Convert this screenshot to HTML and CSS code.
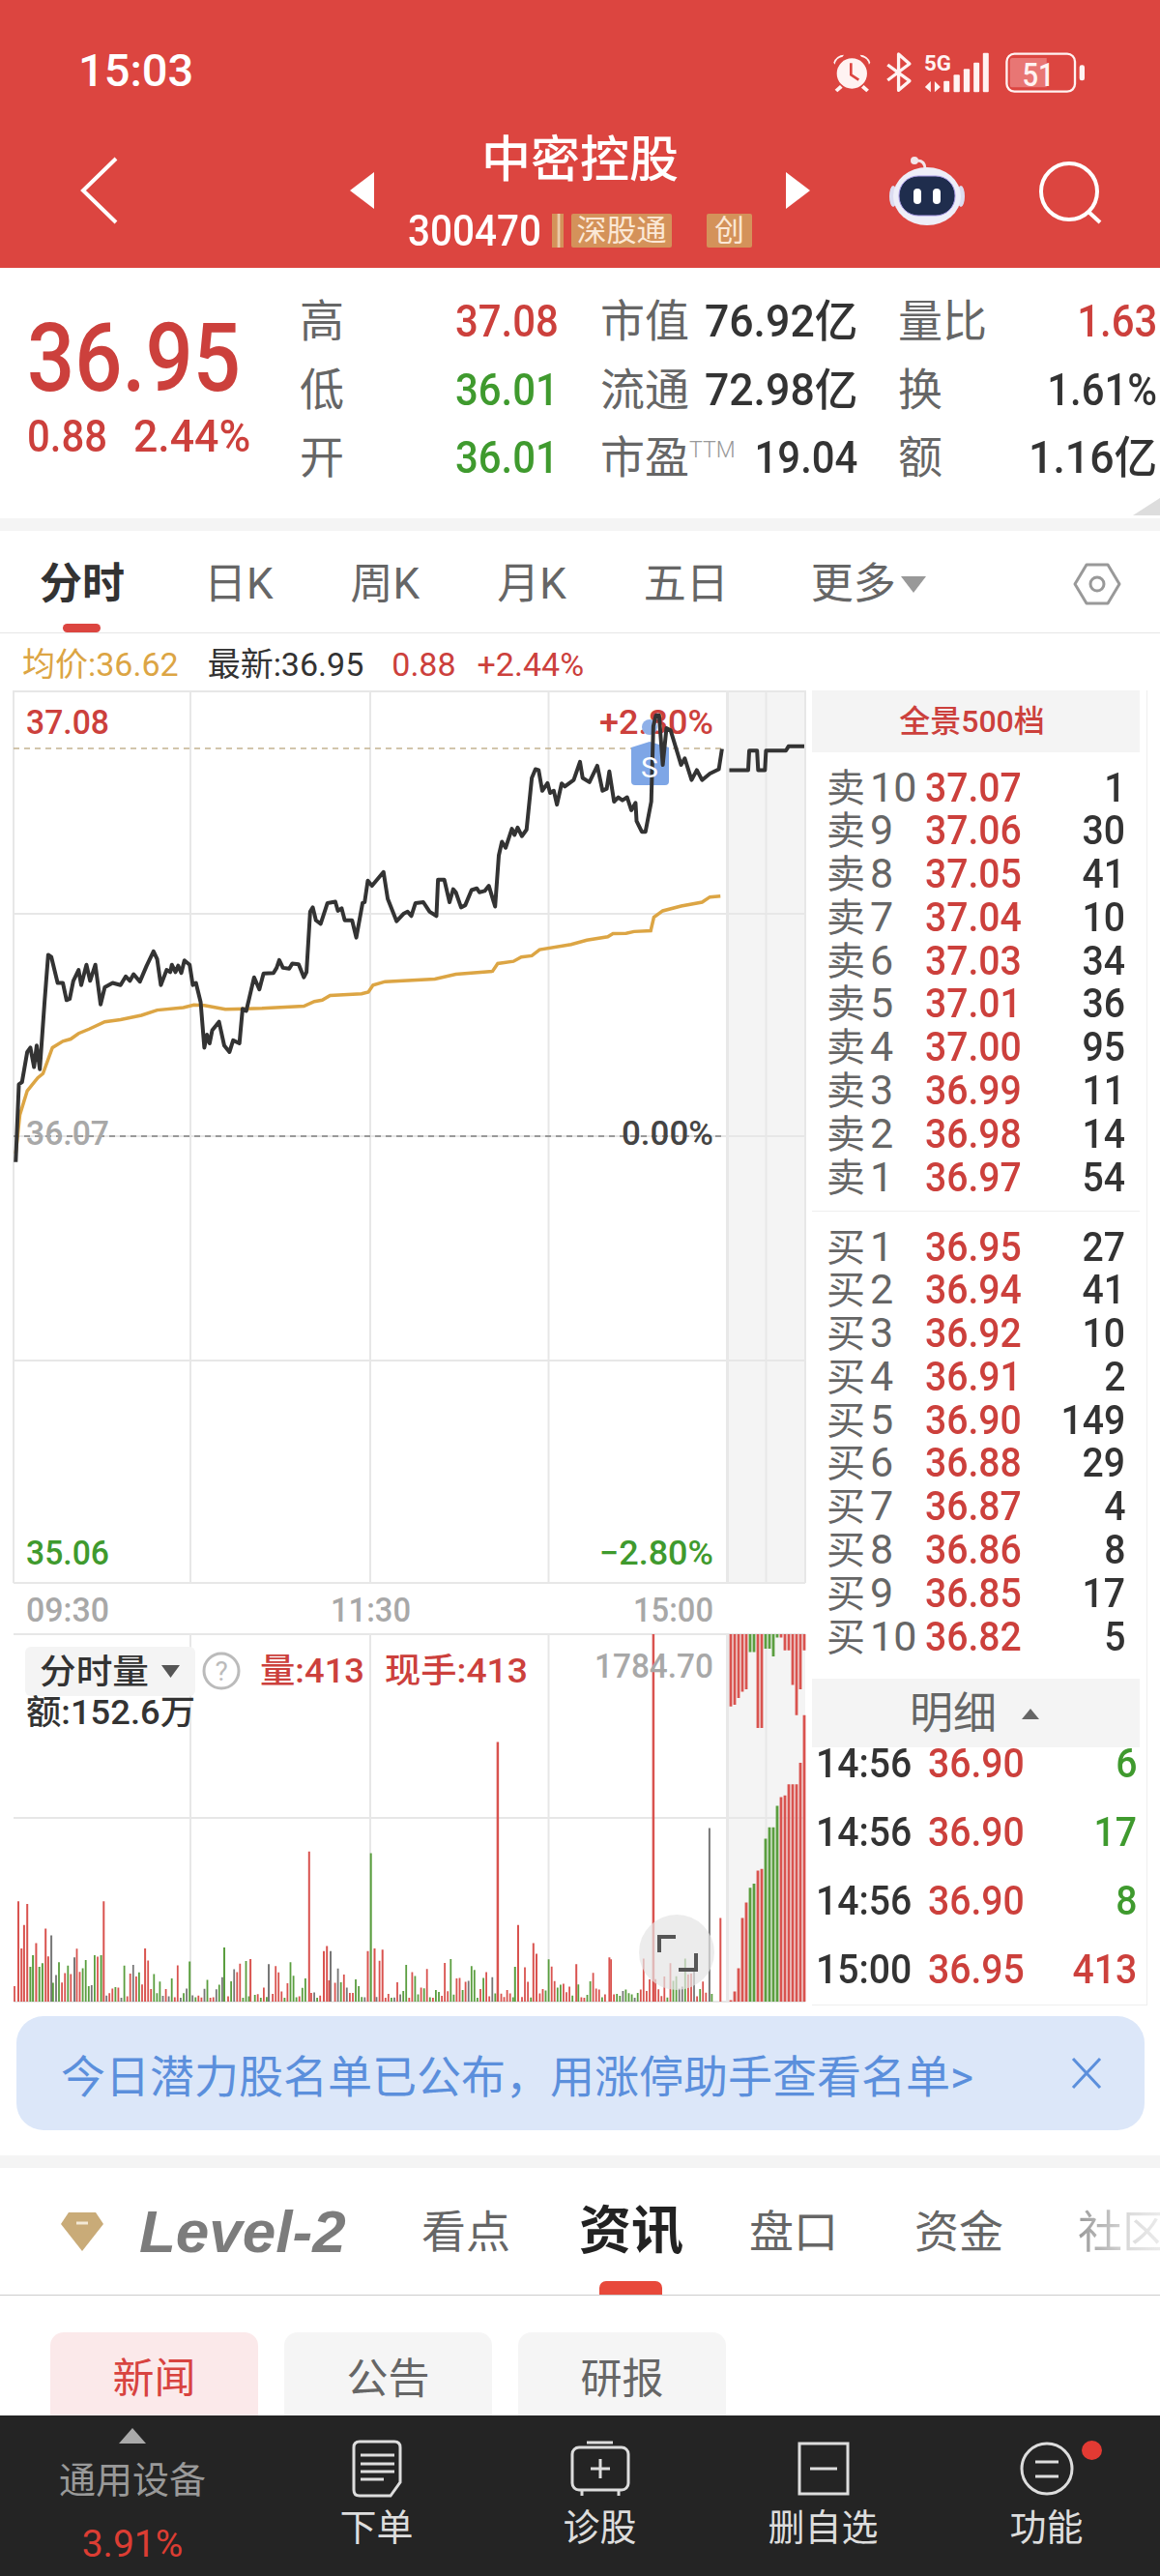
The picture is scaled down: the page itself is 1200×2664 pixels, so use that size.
FILE: index.html
```html
<!DOCTYPE html>
<html lang="zh-CN">
<head>
    <meta charset="UTF-8">
    <meta name="viewport" content="width=device-width, initial-scale=1.0">
    <title>中密控股</title>
    <link rel="stylesheet" href="styles.css">
</head>
<body>
    <div class="page">
        <!-- 顶部红色区域 -->
        <header class="top">
            <div class="status">
                <span class="clock">15:03</span>
                <svg class="status-icons" width="268" height="47" viewBox="55 60 805 141">
                    <g fill="#fff3f2">
                        <circle cx="125" cy="132" r="47"/>
                        <path d="M68 98 A34 34 0 0 1 100 74 L96 80 A30 30 0 0 0 72 104Z"/>
                        <path d="M182 98 A34 34 0 0 0 150 74 L154 80 A30 30 0 0 1 178 104Z"/>
                        <path d="M72 182 L88 168 L96 176 L80 190Z M178 182 L162 168 L154 176 L170 190Z"/>
                    </g>
                    <path d="M122 100 V136 L146 152" fill="none" stroke="#dc4540" stroke-width="8"/>
                    <path d="M236 105 L304 155 L270 184 V72 L304 102 L236 153" fill="none" stroke="#fff3f2" stroke-width="10" stroke-linejoin="round"/>
                    <text class="st-5g" x="349" y="124" textLength="84" lengthAdjust="spacingAndGlyphs">5G</text>
                    <path d="M352 174 L370 156 V190Z M382 156 L400 174 L382 190Z" fill="#fff3f2"/>
                    <g fill="#fff3f2">
                        <rect x="410" y="155" width="18" height="35" rx="3"/>
                        <rect x="441" y="136" width="19" height="54" rx="3"/>
                        <rect x="472" y="118" width="19" height="72" rx="3"/>
                        <rect x="503" y="98" width="18" height="92" rx="3"/>
                        <rect x="532" y="68" width="18" height="122" rx="3"/>
                    </g>
                    <rect x="606" y="71" width="212" height="117" rx="24" fill="none" stroke="#fff3f2" stroke-width="7"/>
                    <path d="M622 84 H730 V175 H622 Q616 175 616 168 V92 Q616 84 622 84Z" fill="#e87674"/>
                    <rect x="832" y="106" width="16" height="48" rx="7" fill="#fff3f2"/>
                    <text class="st-batt" x="654" y="170" textLength="100" lengthAdjust="spacingAndGlyphs">51</text>
                </svg>
            </div>
            <div class="nav">
                <div class="nav-left">
                    <svg width="39" height="70" viewBox="0 0 39 70"><path d="M37 2 L3 35 L37 68" fill="none" stroke="#fff" stroke-width="4"/></svg>
                </div>
                <div class="stock">
                    <span class="tri tri-left"></span>
                    <div class="stock-mid">
                        <div class="stock-name">中密控股</div>
                        <div class="stock-code">
                            <span class="code">300470</span>
                            <span class="sliver"></span>
                            <span class="badge">深股通</span>
                            <span class="badge badge-cy">创</span>
                        </div>
                    </div>
                    <span class="tri tri-right"></span>
                </div>
                <div class="nav-right">
                    <svg width="80" height="72" viewBox="0 0 80 72">
                        <path d="M38 14 Q38 5 30 5" fill="none" stroke="#f3e6ea" stroke-width="3"/>
                        <circle cx="27" cy="5" r="4" fill="#f3e6ea"/>
                        <ellipse cx="5" cy="42" rx="4" ry="11" fill="#dcdcf0"/>
                        <ellipse cx="75" cy="42" rx="4" ry="11" fill="#dcdcf0"/>
                        <ellipse cx="40" cy="42" rx="35" ry="30" fill="#eeeef8"/>
                        <rect x="11" y="21" width="58" height="41" rx="20" fill="#1f2d4d" stroke="#a99be6" stroke-width="1"/>
                        <rect x="26" y="34" width="8" height="16" rx="4" fill="#fff"/>
                        <rect x="46" y="34" width="8" height="16" rx="4" fill="#fff"/>
                    </svg>
                    <svg class="search" width="66" height="66" viewBox="0 0 66 66">
                        <circle cx="32" cy="32" r="29" fill="none" stroke="#fff" stroke-width="4"/>
                        <path d="M52 53 L64 64" stroke="#fff" stroke-width="4"/>
                    </svg>
                </div>
            </div>
        </header>

        <!-- 报价 -->
        <section class="quote">
            <div class="quote-main">
                <div class="big-price c-l">36.95</div>
                <div class="quote-sub">
                    <span class="sub-a"><span class="c-l">0.88</span></span><span class="c-l c-wide">2.44%</span>
                </div>
            </div>
            <div class="quote-table">
                <div class="q-row">
                    <span class="q-lab">高</span>
                    <span class="q-val red"><span class="c-l">37.08</span></span>
                    <span class="q-cell"><span class="q-name">市值</span><span class="c-r c-wide">76.92亿</span></span>
                    <span class="q-cell"><span class="q-name">量比</span><span class="c-r red">1.63</span></span>
                </div>
                <div class="q-row">
                    <span class="q-lab">低</span>
                    <span class="q-val green"><span class="c-l">36.01</span></span>
                    <span class="q-cell"><span class="q-name">流通</span><span class="c-r c-wide">72.98亿</span></span>
                    <span class="q-cell"><span class="q-name">换</span><span class="c-r">1.61%</span></span>
                </div>
                <div class="q-row">
                    <span class="q-lab">开</span>
                    <span class="q-val green"><span class="c-l">36.01</span></span>
                    <span class="q-cell"><span class="q-name">市盈<sup class="ttm">TTM</sup></span><span class="c-r">19.04</span></span>
                    <span class="q-cell"><span class="q-name">额</span><span class="c-r c-wide">1.16亿</span></span>
                </div>
            </div>
            <span class="corner"></span>
        </section>

        <!-- 周期切换 -->
        <nav class="tabs">
            <span class="tab tab-on">分时</span>
            <span class="tab">日K</span>
            <span class="tab">周K</span>
            <span class="tab">月K</span>
            <span class="tab">五日</span>
            <span class="tab tab-more">更多<i class="more-tri"></i></span>
            <svg class="hex" width="50" height="50" viewBox="0 0 50 50">
                <path d="M14 5 H36 L48 25 L36 45 H14 L2 25Z" fill="none" stroke="#999" stroke-width="3" stroke-linejoin="round"/>
                <circle cx="25" cy="25" r="7" fill="none" stroke="#999" stroke-width="3"/>
            </svg>
        </nav>

        <div class="stats">
            <span class="tan">均价:36.62</span>
            <span class="dark">最新:36.95</span>
            <span class="red">0.88</span>
            <span class="red">+2.44%</span>
        </div>

        <div class="market">
            <!-- 分时图，坐标直接用页面像素 -->
            <svg class="chart" width="840" height="1360" viewBox="0 714 840 1360">
                <rect x="751" y="714" width="82" height="923" fill="#f4f4f4"/>
                <rect x="751" y="1690" width="82" height="380" fill="#f4f4f4"/>
                <path class="grid" d="M14 715 H833 M14 945 H833 M14 1175 H833 M14 1407 H833 M14 1637 H833 M14 1690 H833 M14 1880 H833 M14 2070 H833"/>
                <path class="grid" d="M14 714 V1637 M197 714 V1637 M383 714 V1637 M567.500 714 V1637 M792.500 714 V1637 M833 714 V1637 M197 1690 V2070 M383 1690 V2070 M567.500 1690 V2070 M792.500 1690 V2070"/>
                <path class="edge" d="M752.500 714 V1637 M752.500 1690 V2070"/>
                <path class="dash-limit" d="M14 774 H751"/>
                <path class="dash-base" d="M14 1175 H751"/>

                <text class="ax red" x="27" y="759" textLength="86" lengthAdjust="spacingAndGlyphs">37.08</text>
                <text class="ax red" x="620" y="759" textLength="118" lengthAdjust="spacingAndGlyphs">+2.80%</text>
                <text class="ax gray" x="27" y="1184" textLength="86" lengthAdjust="spacingAndGlyphs">36.07</text>
                <text class="ax dark" x="643" y="1184" textLength="95" lengthAdjust="spacingAndGlyphs">0.00%</text>
                <text class="ax green" x="27" y="1618" textLength="86" lengthAdjust="spacingAndGlyphs">35.06</text>
                <text class="ax green" x="620" y="1618" textLength="118" lengthAdjust="spacingAndGlyphs">−2.80%</text>

                <!-- 标记 S -->
                <circle cx="672" cy="752" r="8" fill="#8fb0e8"/>
                <path d="M672 767 L692 773 V808 Q692 812 688 812 H657 Q653 812 653 808 V773Z" fill="#7ea6e6"/>

                <!-- 数据取自截图取点 -->
                <g transform="translate(0 550) scale(.542 .4464)">
                    <polyline class="avg" points="30,1440 38,1350 52,1295 72,1265 82,1255 100,1195 120,1180 135,1175 150,1162 170,1152 200,1135 230,1130 270,1120 300,1108 350,1102 370,1096 390,1097 430,1106 500,1104 580,1099 600,1088 615,1085 630,1074 690,1070 703,1066 712,1050 735,1042 830,1036 870,1025 940,1018 950,1000 980,995 995,985 1015,982 1030,968 1090,956 1120,946 1160,938 1170,931 1195,930 1210,926 1242,924 1248,893 1265,878 1300,867 1340,858 1355,846 1375,844"/>
                    <polyline class="price" points="30,1460 36,1280 42,1275 52,1205 58,1195 65,1240 70,1190 76,1245 85,1090 92,980 98,985 110,1045 120,1045 127,1085 133,1082 140,1040 150,1015 155,1050 165,1003 172,1040 182,1003 192,1095 200,1055 215,1045 230,1050 240,1030 248,1040 255,1025 267,1042 280,1005 293,972 300,990 307,1050 318,1015 325,1020 328,1003 335,1020 340,1005 346,1022 352,993 362,1003 368,1050 374,1045 383,1090 390,1195 395,1165 400,1185 405,1155 418,1135 428,1190 438,1205 445,1178 457,1185 463,1105 470,1110 485,1032 495,1060 503,1023 522,1022 528,1010 533,992 540,1010 552,1012 558,1000 570,1002 580,1032 585,1020 592,880 597,870 603,900 612,908 625,860 640,857 645,878 652,872 658,900 672,900 680,940 692,860 696,858 702,808 710,820 732,788 740,850 757,902 770,885 778,880 785,890 793,860 808,858 820,880 833,890 836,806 848,806 858,858 865,828 870,835 880,870 888,865 900,830 910,826 915,835 925,832 933,820 945,868 952,750 958,718 965,732 977,688 982,702 988,685 996,705 1005,690 1015,570 1022,550 1028,552 1035,600 1045,582 1050,605 1057,600 1063,632 1072,583 1078,590 1095,575 1107,533 1112,570 1125,580 1140,542 1150,600 1158,595 1163,555 1172,625 1180,615 1188,622 1197,615 1205,645 1213,628 1215,670 1225,695 1232,695 1243,625 1247,450 1252,425 1258,425 1265,540 1272,455 1280,460 1300,540 1307,525 1320,575 1330,552 1340,575 1355,560 1372,550 1378,503"/>
                    <polyline class="price" points="1392,552 1428,552 1430,507 1445,507 1447,552 1460,552 1462,507 1500,507 1505,497 1535,497"/>
                </g>
                <text class="mark" x="672" y="804" text-anchor="middle">S</text>

                <text class="ax gray" x="27" y="1677" textLength="86" lengthAdjust="spacingAndGlyphs">09:30</text>
                <text class="ax gray" x="342" y="1677" textLength="83" lengthAdjust="spacingAndGlyphs">11:30</text>
                <text class="ax gray" x="655" y="1677" textLength="83" lengthAdjust="spacingAndGlyphs">15:00</text>

                <!-- 成交量由 script.js 画入 -->
                <g id="vol"></g>

                <rect x="26" y="1703" width="176" height="51" rx="6" fill="#f4f4f4"/>
                <text class="vt dark2" x="41" y="1741" textLength="113" lengthAdjust="spacingAndGlyphs">分时量</text>
                <path d="M167 1722 H186 L176.500 1735Z" fill="#555"/>
                <circle cx="229" cy="1728" r="18" fill="none" stroke="#bbb" stroke-width="3"/>
                <text class="qm" x="229" y="1738" text-anchor="middle">?</text>
                <text class="vt red" x="269" y="1740" textLength="108" lengthAdjust="spacingAndGlyphs">量:413</text>
                <text class="vt red" x="398" y="1740" textLength="148" lengthAdjust="spacingAndGlyphs">现手:413</text>
                <text class="vt gray" x="615" y="1735" textLength="123" lengthAdjust="spacingAndGlyphs">1784.70</text>
                <text class="vt dark2" x="27" y="1783" textLength="175" lengthAdjust="spacingAndGlyphs">额:152.6万</text>

                <circle cx="700" cy="2019" r="39" fill="#e4e4e4" fill-opacity=".7"/>
                <path d="M699 2003 H682 V2019 M702 2037 H720 V2020" fill="none" stroke="#555" stroke-width="4"/>
            </svg>

            <aside class="book">
                <div class="book-head">全景500档</div>
                <div class="levels">
                    <div class="lv"><span class="lv-name">卖<b>10</b></span><span class="c-l red">37.07</span><span class="c-r">1</span></div>
                    <div class="lv"><span class="lv-name">卖<b>9</b></span><span class="c-l red">37.06</span><span class="c-r">30</span></div>
                    <div class="lv"><span class="lv-name">卖<b>8</b></span><span class="c-l red">37.05</span><span class="c-r">41</span></div>
                    <div class="lv"><span class="lv-name">卖<b>7</b></span><span class="c-l red">37.04</span><span class="c-r">10</span></div>
                    <div class="lv"><span class="lv-name">卖<b>6</b></span><span class="c-l red">37.03</span><span class="c-r">34</span></div>
                    <div class="lv"><span class="lv-name">卖<b>5</b></span><span class="c-l red">37.01</span><span class="c-r">36</span></div>
                    <div class="lv"><span class="lv-name">卖<b>4</b></span><span class="c-l red">37.00</span><span class="c-r">95</span></div>
                    <div class="lv"><span class="lv-name">卖<b>3</b></span><span class="c-l red">36.99</span><span class="c-r">11</span></div>
                    <div class="lv"><span class="lv-name">卖<b>2</b></span><span class="c-l red">36.98</span><span class="c-r">14</span></div>
                    <div class="lv"><span class="lv-name">卖<b>1</b></span><span class="c-l red">36.97</span><span class="c-r">54</span></div>
                </div>
                <div class="levels levels-buy">
                    <div class="lv"><span class="lv-name">买<b>1</b></span><span class="c-l red">36.95</span><span class="c-r">27</span></div>
                    <div class="lv"><span class="lv-name">买<b>2</b></span><span class="c-l red">36.94</span><span class="c-r">41</span></div>
                    <div class="lv"><span class="lv-name">买<b>3</b></span><span class="c-l red">36.92</span><span class="c-r">10</span></div>
                    <div class="lv"><span class="lv-name">买<b>4</b></span><span class="c-l red">36.91</span><span class="c-r">2</span></div>
                    <div class="lv"><span class="lv-name">买<b>5</b></span><span class="c-l red">36.90</span><span class="c-r">149</span></div>
                    <div class="lv"><span class="lv-name">买<b>6</b></span><span class="c-l red">36.88</span><span class="c-r">29</span></div>
                    <div class="lv"><span class="lv-name">买<b>7</b></span><span class="c-l red">36.87</span><span class="c-r">4</span></div>
                    <div class="lv"><span class="lv-name">买<b>8</b></span><span class="c-l red">36.86</span><span class="c-r">8</span></div>
                    <div class="lv"><span class="lv-name">买<b>9</b></span><span class="c-l red">36.85</span><span class="c-r">17</span></div>
                    <div class="lv"><span class="lv-name">买<b>10</b></span><span class="c-l red">36.82</span><span class="c-r">5</span></div>
                </div>
                <div class="detail-head">明细<i class="detail-tri"></i></div>
                <div class="trades">
                    <div class="tr"><span class="c-l">14:56</span><span class="c-l red">36.90</span><span class="c-r green">6</span></div>
                    <div class="tr"><span class="c-l">14:56</span><span class="c-l red">36.90</span><span class="c-r green">17</span></div>
                    <div class="tr"><span class="c-l">14:56</span><span class="c-l red">36.90</span><span class="c-r green">8</span></div>
                    <div class="tr"><span class="c-l">15:00</span><span class="c-l red">36.95</span><span class="c-r red">413</span></div>
                </div>
            </aside>
        </div>

        <div class="notice">
            <span>今日潜力股名单已公布，用涨停助手查看名单&gt;</span>
            <svg width="32" height="32" viewBox="0 0 32 32"><path d="M2 1 L30 31 M30 1 L2 31" stroke="#5b8fdc" stroke-width="3"/></svg>
        </div>

        <nav class="news-tabs">
            <span class="level2">
                <svg width="44" height="40" viewBox="0 0 44 40">
                    <path d="M8 0 H36 L44 12 L22 40 L0 12Z" fill="#c9ab78"/>
                    <path d="M16 11 H28" stroke="#f3e9d6" stroke-width="3"/>
                </svg>
                <em>Level-2</em>
            </span>
            <span class="nt">看点</span>
            <span class="nt nt-on">资讯</span>
            <span class="nt">盘口</span>
            <span class="nt">资金</span>
            <span class="nt nt-fade">社区</span>
        </nav>

        <div class="chips">
            <span class="chip chip-on">新闻</span>
            <span class="chip">公告</span>
            <span class="chip">研报</span>
        </div>

        <!-- 底部栏 -->
        <footer class="bottom">
            <div class="b-sector">
                <i class="up-tri"></i>
                <span class="sector-name">通用设备</span>
                <span class="sector-pct">3.91%</span>
            </div>
            <div class="b-item">
                <svg width="52" height="60" viewBox="0 0 52 60">
                    <path d="M8 2 H44 Q50 2 50 8 V44 L40 58 H8 Q2 58 2 52 V8 Q2 2 8 2Z" class="ic"/>
                    <path d="M9 16 H44 M9 25 H44 M9 33 H44 M9 41 H33" class="ic"/>
                </svg>
                <span>下单</span>
            </div>
            <div class="b-item">
                <svg width="62" height="60" viewBox="0 0 62 60">
                    <path d="M17 3 H44" class="ic"/>
                    <rect x="2" y="8" width="58" height="44" rx="7" class="ic"/>
                    <path d="M31 20 V40 M21 30 H41 M12 52 V58 M50 52 V58" class="ic"/>
                </svg>
                <span>诊股</span>
            </div>
            <div class="b-item">
                <svg width="54" height="60" viewBox="0 0 54 60">
                    <rect x="2" y="4" width="50" height="52" class="ic"/>
                    <path d="M13 30 H41" class="ic"/>
                </svg>
                <span>删自选</span>
            </div>
            <div class="b-item b-func">
                <svg width="56" height="60" viewBox="0 0 56 60">
                    <circle cx="28" cy="30" r="26" class="ic"/>
                    <path d="M16 23 H40 M16 38 H40" class="ic"/>
                </svg>
                <i class="dot"></i>
                <span>功能</span>
            </div>
        </footer>
    </div>
    <script src="script.js"></script>
</body>
</html>
```

FILE: styles.css
```css
* {
    box-sizing: border-box;
}
body {
    margin: 0;
    background-color: white;
    font-family: Roboto, "Noto Sans CJK SC", sans-serif;
    color: #333;
}
.page {
    width: 1200px;
    height: 2664px;
    overflow: hidden;
}
.red { color: #cc403c; fill: #cc403c; }
.green { color: #3f9a2e; fill: #3f9a2e; }
.gray { fill: #a8a8a8; }
.dark { color: #333; fill: #444; }
.dark2 { fill: #333; }
.tan { color: #dca544; }

/* 数字偏窄，用 scaleX 收一点 */
.c-l, .c-r {
    display: inline-block;
    transform: scaleX(.91);
    white-space: nowrap;
    font-weight: 500;
}
.c-l { transform-origin: left center; }
.c-r { transform-origin: right center; }
.c-wide { transform: scaleX(.97); }

.top {
    height: 277px;
    background-color: #dc4540;
    color: white;
}
.status {
    height: 130px;
    padding: 50px 74px 0 81px;
    display: flex;
    justify-content: space-between;
    align-items: flex-start;
}
.clock {
    font-size: 47px;
    line-height: 46px;
    font-weight: 500;
}
.status-icons {
    margin-top: 2px;
}
.st-5g {
    font-size: 68px;
    font-weight: 700;
    fill: #fff3f2;
}
.st-batt {
    font-size: 100px;
    font-weight: 500;
    fill: #fff3f2;
}
.nav {
    display: grid;
    grid-template-columns: 1fr auto 1fr;
    align-items: center;
    padding-top: 8px;
}
.nav-left {
    padding-left: 83px;
    display: flex;
}
.nav-right {
    display: flex;
    justify-content: flex-end;
    align-items: center;
    gap: 75px;
    padding-right: 60px;
}
.search {
    margin-top: 3px;
}
.stock {
    display: flex;
    align-items: center;
    gap: 35px;
}
.tri {
    width: 0;
    height: 0;
    border-top: 19px solid transparent;
    border-bottom: 19px solid transparent;
}
.tri-left { border-right: 25px solid white; }
.tri-right { border-left: 25px solid white; }
.stock-mid {
    width: 356px;
}
.stock-name {
    font-size: 51px;
    line-height: 50px;
    padding-top: 3px;
    text-align: center;
    font-weight: 500;
}
.stock-code {
    display: flex;
    align-items: center;
    height: 35px;
    margin-top: 30px;
}
.code {
    width: 136px;
    font-size: 44px;
    font-weight: 500;
    display: inline-block;
    transform: scaleX(.92);
    transform-origin: left center;
}
.sliver {
    width: 12px;
    height: 35px;
    margin-left: 13px;
    margin-right: 8px;
    background: linear-gradient(90deg, #d4925a 40%, #f3dcc4 60%, #d4925a 75%);
}
.badge {
    height: 35px;
    line-height: 35px;
    width: 104px;
    text-align: center;
    font-size: 31px;
    background-color: #d4925a;
    color: #fbe8d6;
    border-radius: 2px;
}
.badge-cy {
    width: 47px;
    margin-left: 36px;
}

.quote {
    position: relative;
    height: 272px;
    display: flex;
    border-bottom: 13px solid #f4f4f4;
}
.quote-main {
    width: 310px;
    padding: 43px 0 0 28px;
}
.big-price {
    display: block;
    font-size: 99px;
    line-height: 100px;
    color: #cc403c;
    transform: scaleX(.875);
}
.quote-sub {
    margin-top: 8px;
    font-size: 46px;
    line-height: 46px;
    color: #cc403c;
}
.sub-a {
    display: inline-block;
    width: 110px;
}
.quote-table {
    padding-top: 20px;
}
.q-row {
    height: 70.6px;
    display: flex;
    align-items: center;
    font-size: 46px;
    line-height: 50px;
}
.q-lab {
    width: 161px;
    color: #666;
}
.q-val {
    width: 150px;
}
.q-cell {
    width: 266px;
    display: flex;
    justify-content: space-between;
}
.q-cell + .q-cell {
    width: 268px;
    margin-left: 42px;
}
.q-name {
    color: #666;
    white-space: nowrap;
}
.ttm {
    font-size: 23px;
    font-weight: 300;
    color: #999;
    line-height: 0;
}
.corner {
    position: absolute;
    right: 0;
    bottom: 3px;
    width: 0;
    height: 0;
    border-left: 28px solid transparent;
    border-bottom: 18px solid #ddd;
}

.tabs {
    position: relative;
    height: 106px;
    padding: 0 40px 0 41px;
    display: flex;
    gap: 80px;
    align-items: flex-start;
    border-bottom: 1px solid #e6e6e6;
}
.tab {
    font-size: 44px;
    line-height: 50px;
    margin-top: 30px;
    color: #666;
}
.tab-on {
    position: relative;
    font-weight: 700;
    color: #333;
    margin-right: 2px;
}
.tab-on::after {
    content: "";
    position: absolute;
    left: 24px;
    top: 66px;
    width: 39px;
    height: 9px;
    border-radius: 5px;
    background-color: #dc4540;
}
.tab-more {
    margin-left: 5px;
    display: flex;
    align-items: center;
}
.more-tri {
    width: 0;
    height: 0;
    margin-left: 5px;
    border-left: 13px solid transparent;
    border-right: 13px solid transparent;
    border-top: 17px solid #999;
}
.hex {
    margin-left: auto;
    margin-top: 30px;
}

.stats {
    height: 59px;
    padding-left: 23px;
    padding-top: 7px;
    display: flex;
    align-items: center;
    font-size: 34px;
    line-height: 40px;
    margin-top: -1px;
    gap: 30px;
}
.stats .red { margin-left: -1px; }
.stats .red + .red { margin-left: -8px; }

.market {
    display: flex;
    height: 1360px;
    margin-top: 1px;
}
.chart {
    display: block;
    flex: none;
}
.grid {
    fill: none;
    stroke: #e7e7e7;
    stroke-width: 2;
}
.edge {
    fill: none;
    stroke: #e8e8e8;
    stroke-width: 3;
}
.dash-limit {
    fill: none;
    stroke: #c4b391;
    stroke-width: 1.5;
    stroke-dasharray: 6 5;
}
.dash-base {
    fill: none;
    stroke: #999;
    stroke-width: 2;
    stroke-dasharray: 6 5;
}
.ax {
    font-size: 35px;
    font-weight: 500;
}
.vt {
    font-size: 35px;
    font-weight: 500;
}
.qm {
    font-size: 28px;
    fill: #bbb;
}
.mark {
    font-size: 30px;
    fill: white;
}
.price {
    fill: none;
    stroke: #333;
    stroke-width: 4;
    vector-effect: non-scaling-stroke;
    stroke-linejoin: round;
}
.avg {
    fill: none;
    stroke: #dca544;
    stroke-width: 3.5;
    vector-effect: non-scaling-stroke;
}

.book {
    width: 347px;
    height: 1360px;
    padding-right: 7px;
    border-right: 1px solid #eee;
    border-bottom: 1px solid #eee;
    font-size: 43px;
}
.book-head {
    height: 64px;
    line-height: 64px;
    background-color: #f4f4f4;
    color: #cc403c;
    font-size: 32px;
    font-weight: 500;
    text-align: center;
    padding-right: 8px;
}
.levels {
    padding: 13.500px 15px 0 15px;
    height: 475px;
    border-bottom: 1px solid #eee;
}
.levels-buy {
    border-bottom: none;
    height: 483px;
}
.lv {
    height: 44.800px;
    line-height: 44.800px;
    display: grid;
    grid-template-columns: 102px 1fr auto;
    color: #333;
}
.lv-name {
    font-size: 40px;
    color: #666;
    white-space: nowrap;
}
.lv-name b {
    font-size: 43px;
    font-weight: 400;
    display: inline-block;
    margin-left: 5px;
}
.detail-head {
    position: relative;
    z-index: 1;
    height: 71px;
    padding-top: 2px;
    background-color: #f4f4f4;
    color: #666;
    font-size: 45px;
    line-height: 60px;
    padding-left: 101px;
    display: flex;
    align-items: center;
}
.detail-tri {
    margin-left: 26px;
    width: 0;
    height: 0;
    border-left: 9px solid transparent;
    border-right: 9px solid transparent;
    border-bottom: 11px solid #666;
}
.trades {
    margin-top: -20px;
    padding: 0 3px 0 4px;
}
.tr {
    height: 71px;
    line-height: 30px;
    display: grid;
    grid-template-columns: 116px 1fr auto;
    align-items: center;
    color: #333;
}

.notice {
    margin: 11px 16px 0 17px;
    height: 118px;
    border-radius: 28px;
    background-color: #dce7f9;
    color: #5b8fdc;
    font-size: 46px;
    padding: 0 44px 0 46px;
    display: flex;
    align-items: center;
    justify-content: space-between;
}
.news-tabs {
    margin-top: 26px;
    border-top: 13px solid #f4f4f4;
    border-bottom: 1px solid #ccc;
    height: 145px;
    padding-left: 63px;
    display: grid;
    grid-template-columns: 373px 163px 176px 171px 169px 1fr;
    align-items: center;
    overflow: hidden;
    white-space: nowrap;
}
.level2 {
    display: flex;
    align-items: center;
    gap: 37px;
}
.level2 em {
    font-family: "Liberation Sans", sans-serif;
    font-weight: 700;
    font-size: 62px;
    line-height: 62px;
    color: #7c7c7c;
}
.nt {
    font-size: 46px;
    line-height: 60px;
    color: #666;
}
.nt-on {
    position: relative;
    font-size: 54px;
    font-weight: 700;
    color: #222;
}
.nt-on::after {
    content: "";
    position: absolute;
    left: 21px;
    top: 81px;
    width: 65px;
    height: 14px;
    border-radius: 7px 7px 0 0;
    background-color: #e8493b;
}
.nt-fade {
    background: linear-gradient(90deg, #999, #ddd 60%, #eee);
    -webkit-background-clip: text;
    background-clip: text;
    color: transparent;
}
.chips {
    height: 124px;
    padding: 38px 0 0 52px;
    display: flex;
    gap: 27px;
    align-items: flex-start;
}
.chip {
    width: 215px;
    height: 86px;
    border-radius: 14px 14px 0 0;
    background-color: #f5f5f5;
    color: #666;
    font-size: 43px;
    text-align: center;
    line-height: 96px;
}
.chip-on {
    background-color: #fbe9ea;
    color: #d8433f;
}

.bottom {
    height: 167px;
    background-color: #242424;
    display: grid;
    grid-template-columns: 274px repeat(4, 231px);
    color: #ddd;
}
.b-sector {
    display: flex;
    flex-direction: column;
    align-items: center;
    position: relative;
}
.up-tri {
    width: 0;
    height: 0;
    margin-top: 13px;
    border-left: 14px solid transparent;
    border-right: 14px solid transparent;
    border-bottom: 16px solid #aaa;
}
.sector-name {
    margin-top: 16px;
    font-size: 38px;
    line-height: 44px;
    color: #999;
}
.sector-pct {
    margin-top: 22px;
    font-size: 39px;
    line-height: 44px;
    color: #dc3d33;
}
.b-item {
    position: relative;
    display: flex;
    flex-direction: column;
    align-items: center;
    padding-top: 25px;
    font-size: 38px;
    line-height: 44px;
}
.b-item svg {
    display: block;
    margin-bottom: 9px;
}
.ic {
    fill: none;
    stroke: #ddd;
    stroke-width: 3;
}
.dot {
    position: absolute;
    left: 152px;
    top: 26px;
    width: 21px;
    height: 20px;
    border-radius: 50%;
    background-color: #e33a33;
}
```

FILE: script.js
```js
// 成交量柱：大柱是从截图量出来的，其余小柱用固定种子生成
var BASE = 2070;
var STEP = 3.07;
var RED = '#d9534f', GREEN = '#5a9e3f', GRAY = '#777';

// [截图x, 截图顶部y, 颜色]
var spikes = [
    [35, 1340, RED], [41, 1430, RED], [46, 1385, RED], [52, 1345, RED], [58, 1465, GREEN],
    [63, 1443, GREEN], [69, 1420, RED], [75, 1465, GREEN], [81, 1458, GREEN], [87, 1392, RED],
    [92, 1445, RED], [98, 1405, GRAY], [142, 1447, GRAY], [193, 1443, GREEN], [198, 1340, RED],
    [277, 1430, RED], [362, 1455, GREEN], [428, 1428, GREEN], [478, 1450, RED], [513, 1460, GRAY],
    [590, 1245, RED], [618, 1435, RED], [624, 1425, RED], [631, 1435, GRAY], [702, 1435, RED],
    [708, 1248, GREEN], [715, 1430, RED], [730, 1432, RED], [950, 1036, RED], [983, 1465, GREEN],
    [989, 1385, RED], [1018, 1420, RED], [1024, 1440, RED], [1100, 1460, RED], [1163, 1447, RED],
    [1247, 830, RED], [1354, 1200, GRAY], [1375, 1372, RED]
];

// 收盘后区域，每根 4px，截图y
var up = [
    [1555, RED], [1545, RED], [1518, RED], [1460, RED], [1442, RED], [1425, GREEN], [1420, GREEN],
    [1405, RED], [1403, RED], [1368, GREEN], [1355, GREEN], [1355, GREEN], [1330, GREEN], [1320, RED],
    [1318, RED], [1305, RED], [1305, RED], [1305, RED], [1280, RED], [1225, RED]
];
var down = [
    [1215, RED], [1213, RED], [1205, RED], [1198, RED], [1195, RED], [1152, GREEN], [1152, GREEN],
    [1240, RED], [1240, RED], [1148, GREEN], [1148, GREEN], [1157, GREEN], [1135, GREEN], [1135, RED],
    [1150, RED], [1150, RED], [1190, RED], [1225, RED], [1195, RED], [1150, RED]
];

function spikeY(zy) {
    return zy / 1.845 + 1240;
}
function bookY(zy) {
    return zy / 1.12 + 680;
}

var seed = 47;
function rnd() {
    seed = (seed * 16807) % 2147483647;
    return seed / 2147483647;
}

var paths = {};
function addBar(color, width, x, y1, y2) {
    var key = color + '|' + width;
    paths[key] = (paths[key] || '') + 'M' + x.toFixed(1) + ' ' + y1.toFixed(1) + 'V' + y2.toFixed(1);
}

var taken = {};
spikes.forEach(function (s) {
    var x = s[0] / 1.845;
    taken[Math.round((x - 15) / STEP)] = true;
    addBar(s[2], s[1] < 1100 ? 2.5 : 2, x, BASE, spikeY(s[1]));
});

for (var i = 0; i < 236; i++) {
    var r = rnd(), c = rnd();
    if (taken[i]) continue;
    var h = 4 + Math.pow(r, 2.2) * 42;
    if (i < 30) h += 12;
    addBar(c < 0.45 ? RED : c < 0.85 ? GREEN : GRAY, 1.8, 15 + i * STEP, BASE, BASE - h);
}

up.forEach(function (s, n) {
    addBar(s[1], 2.8, 756 + n * 4, BASE, bookY(s[0]));
});
down.forEach(function (s, n) {
    addBar(s[1], 2.8, 756 + n * 4, 1690, bookY(s[0]));
});

var vol = document.getElementById('vol');
Object.keys(paths).forEach(function (key) {
    var parts = key.split('|');
    var p = document.createElementNS('http://www.w3.org/2000/svg', 'path');
    p.setAttribute('d', paths[key]);
    p.setAttribute('stroke', parts[0]);
    p.setAttribute('stroke-width', parts[1]);
    p.setAttribute('fill', 'none');
    vol.appendChild(p);
});
```
